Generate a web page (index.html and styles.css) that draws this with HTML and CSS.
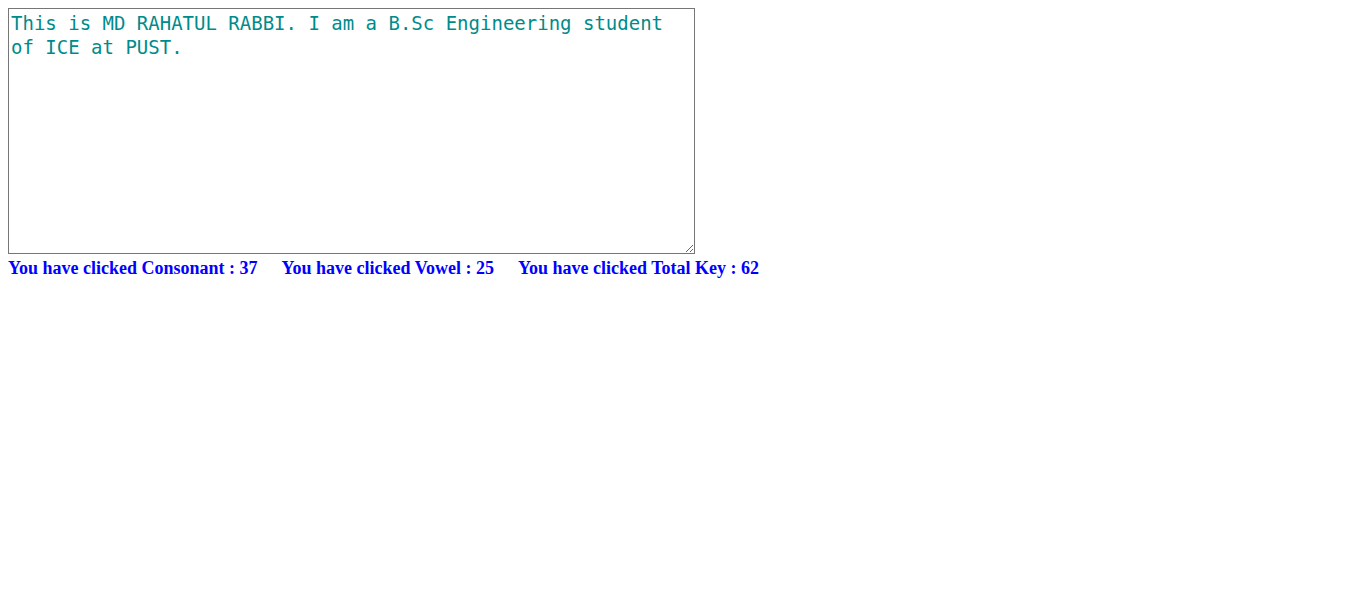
FILE: index.html
```html
<!DOCTYPE html>
<html>
<head>
<meta charset="utf-8">
<link rel="stylesheet" href="styles.css">
</head>
<body>
<textarea class="editor">This is MD RAHATUL RABBI. I am a B.Sc Engineering student of ICE at PUST.</textarea>
<div class="stats">
  <span class="stat">You have clicked Consonant : 37</span>
  <span class="stat">You have clicked Vowel : 25</span>
  <span class="stat">You have clicked Total Key : 62</span>
</div>
</body>
</html>
```
FILE: styles.css
```css
body {
  margin: 8px;
  background: #fff;
}
.editor {
  display: block;
  box-sizing: border-box;
  width: 687px;
  height: 246px;
  margin: 0;
  padding: 2px;
  border: 1px solid #767676;
  font-family: "DejaVu Sans Mono", monospace;
  font-size: 19px;
  line-height: 24px;
  color: #008b8b;
}
.stats {
  display: flex;
  gap: 24px;
  margin-top: 4px;
  font-family: "Liberation Serif", serif;
  font-weight: bold;
  font-size: 18px;
  line-height: 20px;
  color: #0000ff;
}
```
